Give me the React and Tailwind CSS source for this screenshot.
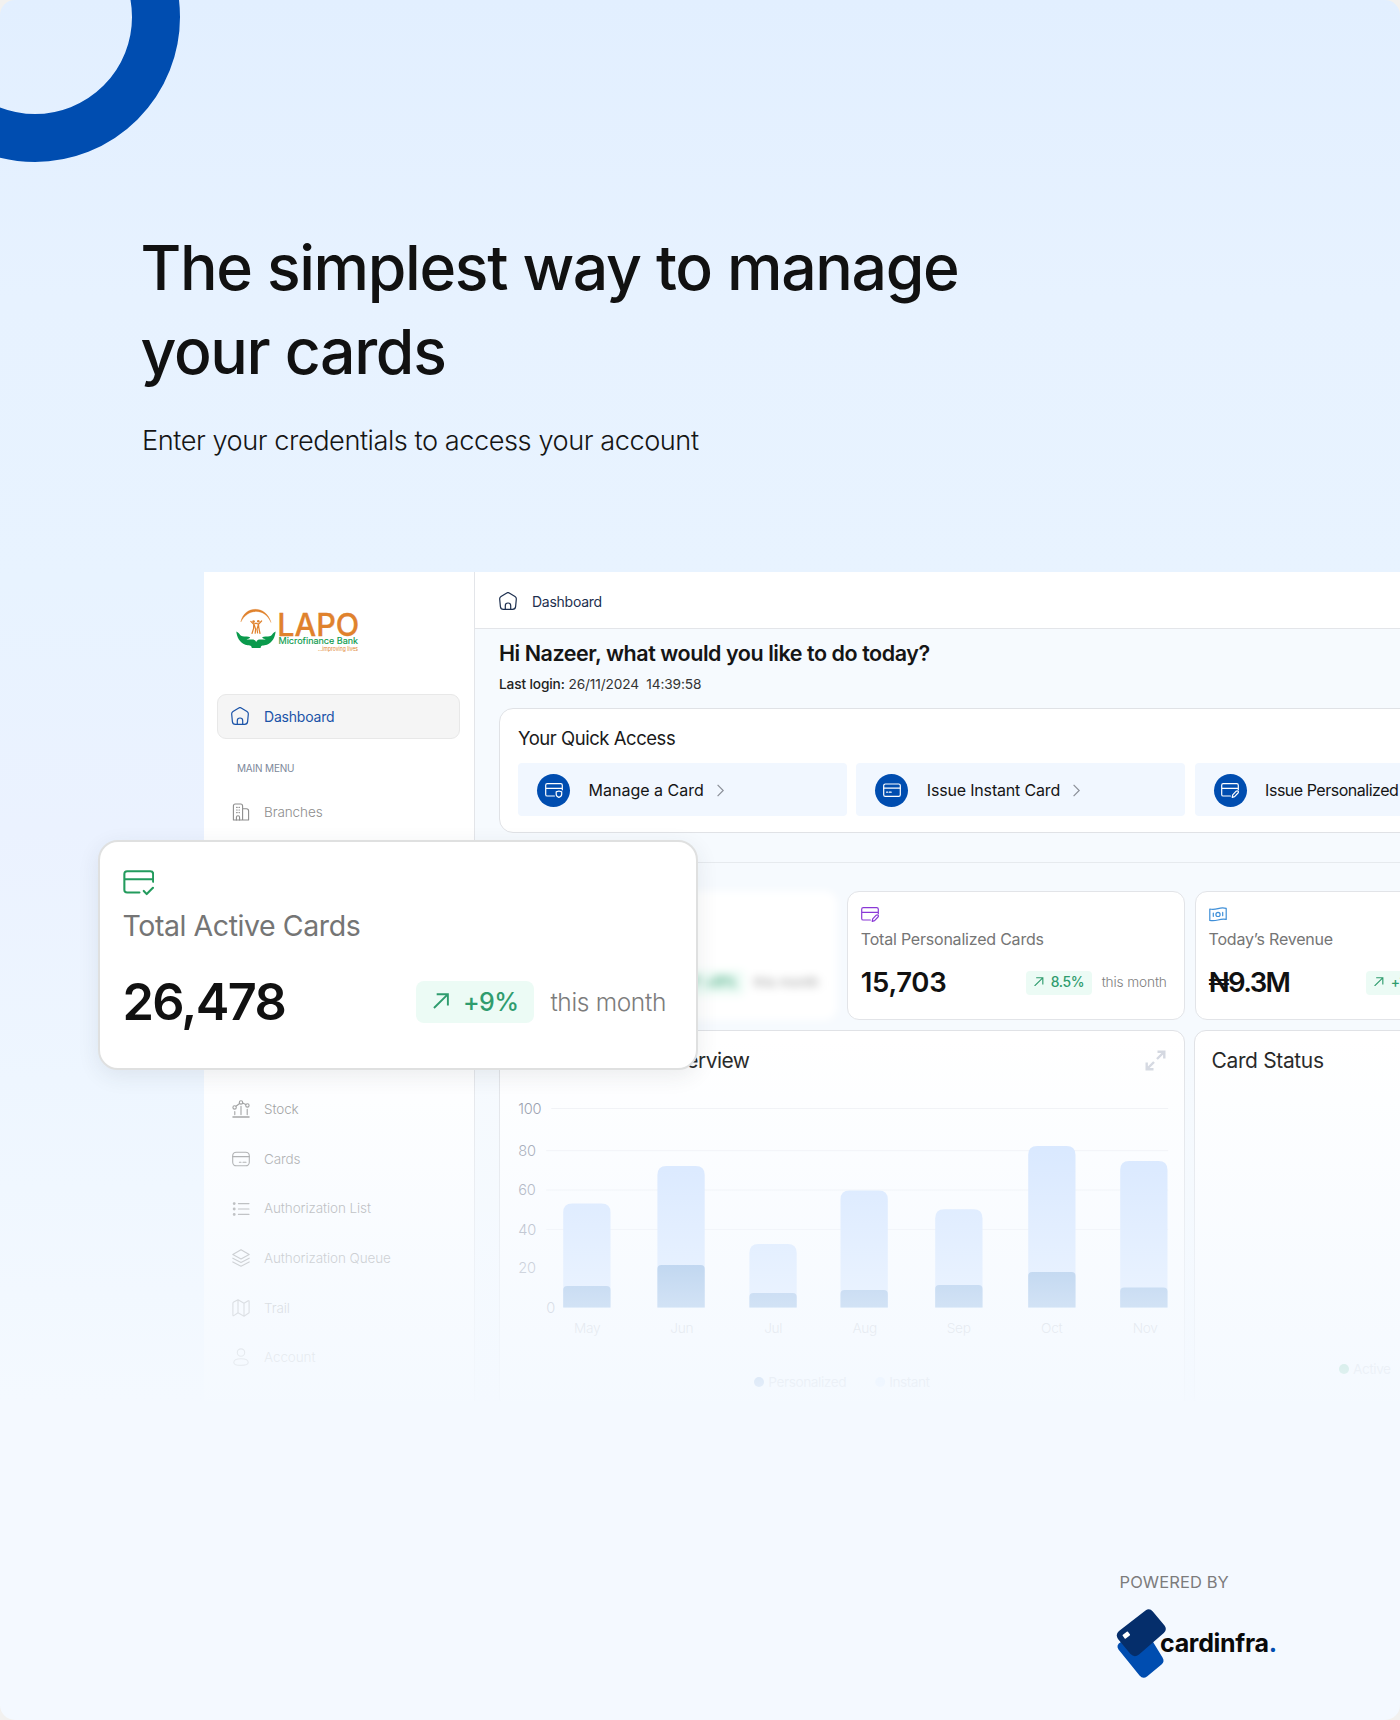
import React from "react";

function HomeIcon({ className }) {
  return (
    <svg className={className} width="18" height="18" viewBox="0 0 18 18" fill="none" stroke="currentColor" strokeWidth="1.2" strokeLinejoin="round" strokeLinecap="round">
      <path d="M7.800 .9 Q9 .2 10.200 .9 L16 4.500 Q17.500 5.500 17.300 7.200 L16.600 14.600 Q16.300 17.300 13.600 17.300 H4.400 Q1.700 17.300 1.400 14.600 L.7 7.200 Q.5 5.500 2 4.500 Z" />
      <path d="M6.300 17.100 V13.700 A2.700 2.700 0 0 1 11.700 13.700 V17.100" />
    </svg>
  );
}

function NavIcon({ name }) {
  const common = { width: 18, height: 18, viewBox: "0 0 18 18", fill: "none", stroke: "currentColor", strokeWidth: 1.1, strokeLinecap: "round", strokeLinejoin: "round" };
  if (name === "branches")
    return (
      <svg {...common}>
        <path d="M1.4 17 V3 Q1.4 1 3.4 1 H8.6 Q10.6 1 10.6 3 V17 Z M10.6 5.8 H14.4 Q16.6 5.8 16.6 8 V17 H10.6" />
        <path d="M4.4 17 V14.4 A1.6 1.6 0 0 1 7.6 14.4 V17 M4.6 4.4 H5.2 M7 4.4 H7.4 M4.6 7 H5.2 M7 7 H7.4 M4.6 9.6 H5.2 M7 9.6 H7.4" />
      </svg>
    );
  if (name === "stock")
    return (
      <svg {...common}>
        <path d="M1 17 H17" strokeWidth="1.5" />
        <circle cx="2.6" cy="7.4" r="1.7" /><circle cx="9" cy="2.4" r="1.7" /><circle cx="15.4" cy="5.4" r="1.7" />
        <path d="M4 6.2 L7.6 3.5 M10.6 3 L13.8 4.6 M2.8 11.5 V14.6 M9 6.4 V14.6 M15.2 9.4 V14.6" />
      </svg>
    );
  if (name === "cards")
    return (
      <svg {...common}>
        <rect x=".7" y="2.2" width="16.6" height="13.6" rx="3.6" />
        <path d="M.7 6.6 H17.3 M7.4 12.2 H9 M11 12.2 H14" />
      </svg>
    );
  if (name === "list")
    return (
      <svg {...common}>
        <path d="M6.4 3.6 H17 M6.4 9 H17 M6.4 14.4 H17" />
        <circle cx="2.2" cy="3.6" r=".9" fill="currentColor" /><circle cx="2.2" cy="9" r=".9" fill="currentColor" /><circle cx="2.2" cy="14.4" r=".9" fill="currentColor" />
      </svg>
    );
  if (name === "layers")
    return (
      <svg {...common}>
        <path d="M9 .8 L17.2 5.4 L9 10 L.8 5.4 Z M.8 9.2 L9 13.6 L17.2 9.2 M.8 12.9 L9 17.3 L17.2 12.9" />
      </svg>
    );
  if (name === "map")
    return (
      <svg {...common}>
        <path d="M.9 4.4 Q.9 3.4 1.7 3 L6 .8 L12 4.2 L16.2 1.8 Q17.1 1.4 17.1 2.4 V13.8 L12 17.2 L6 13.8 L1.8 16.6 Q.9 17.1 .9 16 Z M6 .8 V13.8 M12 4.2 V17.2" />
      </svg>
    );
  return (
    <svg {...common}>
      <circle cx="9" cy="4.6" r="3.7" />
      <path d="M9 10.8 C13.2 10.8 16.2 12.4 16.2 14.6 C16.2 16.6 13.8 17.4 9 17.4 C4.2 17.4 1.8 16.6 1.8 14.6 C1.8 12.4 4.8 10.8 9 10.8 Z" />
    </svg>
  );
}

function CardIcon({ kind, className }) {
  return (
    <svg className={className} viewBox="0 0 18 15" fill="none" stroke="currentColor" strokeWidth="1.2" strokeLinecap="round" strokeLinejoin="round">
      {kind === "plain" ? (
        <>
          <rect x=".7" y="1" width="16.6" height="12.4" rx="1.6" />
          <path d="M.7 5.2 H17.3 M3.6 9.2 H4.6 M6.2 9.2 H8.2" />
        </>
      ) : (
        <>
          <path d="M9.4 13 H2.3 Q.7 13 .7 11.4 V2.3 Q.7 .7 2.3 .7 H15.7 Q17.3 .7 17.3 2.3 V6.8 M.7 5.300 H17.3" />
          {kind === "check" && <path d="M11.9 12.1 L13.6 13.9 L17.2 10.3" />}
          {kind === "shield" && <path d="M11.2 8.8 L13.9 8 L16.7 8.8 V11.2 Q16.7 13.4 13.9 14.4 Q11.2 13.4 11.2 11.2 Z" />}
          {kind === "pen" && <path d="M15.2 8.2 Q16.2 7.4 17 8.2 Q17.8 9.1 17 10 L13.6 13.6 L11.2 14.3 L11.7 11.9 Z" />}
        </>
      )}
    </svg>
  );
}

function MoneyIcon({ className }) {
  return (
    <svg className={className} viewBox="0 0 18 15" fill="none" stroke="currentColor" strokeWidth="1.2" strokeLinecap="round" strokeLinejoin="round">
      <path d="M.8 2 Q4.500 2.800 9 1.600 T17.2 1.400 V12.400 Q13.500 11.800 9 13 T.8 13.400 Z" />
      <circle cx="9" cy="7.400" r="2.100" />
      <path d="M4.300 6 V9.300 M13.700 5.400 V8.700" />
    </svg>
  );
}

function TrendArrow({ className }) {
  return (
    <svg className={className} viewBox="0 0 10 10" fill="none" stroke="currentColor" strokeWidth="1.2">
      <path d="M.6 9.4 L9.2 .9 M2.3 .8 H9.3 V7.8" />
    </svg>
  );
}

function LapoLogo() {
  return (
    <svg className="overflow-visible" width="124" height="44" viewBox="0 0 124 44" fontFamily="Inter, sans-serif">
      <path d="M4.800 13 C8 -3.500 30 -4.500 35 13.500 C29 -1.500 11.500 -.8 4.800 13 Z" fill="#e0822d" stroke="#e0822d" strokeWidth=".3" />
      <g stroke="#e0822d" strokeWidth="1.200" fill="none" strokeLinecap="round">
        <path d="M14.800 12.300 L17.700 15.200 L20 14.200 L22.500 15.200 L25.600 12 M17.700 15.200 L17.600 19.500 L16 24.500 M18.300 16 L19.600 20 L19.200 24.200 M22.500 15.200 L22.900 19.500 L24 24.500 M22.300 16 L21 20 L21.600 24" />
      </g>
      <circle cx="17.600" cy="12.600" r="1.300" fill="#e0822d" /><circle cx="22.300" cy="12.200" r="1.300" fill="#e0822d" />
      <path d="M.3 22.600 C3 23.600 3.500 25.500 5 26.800 C8 28.400 11 26.400 14.200 28.200 C13.400 29.800 11.500 30 10.500 30.200 C14.500 31.400 18.500 28.600 20.200 33 C21.800 28.600 25.800 31.400 29.800 30.200 C28.800 30 26.900 29.800 26.100 28.200 C29.300 26.400 32 28.400 35 26.800 C36.500 25.500 37 23.600 39.600 22.600 C39 28.500 36.500 33.500 31 35.800 C27.500 37 24.800 35.800 24.600 39 H15.800 C15.600 35.800 12.800 37 9.300 35.800 C3.500 33.500 1 28.500 .3 22.600 Z" fill="#0a9a4c" />
      <text x="41.300" y="26.600" fontSize="31" fontWeight="500" fill="#e0822d" stroke="#e0822d" strokeWidth=".3" textLength="82" lengthAdjust="spacingAndGlyphs">LAPO</text>
      <text x="42.500" y="34.900" fontSize="9" fontWeight="400" fill="#0a9a4c" stroke="#0a9a4c" strokeWidth=".15" textLength="79.500" lengthAdjust="spacingAndGlyphs">Microfinance Bank</text>
      <text x="82" y="42.200" fontSize="5.600" fill="#e0822d" textLength="40" lengthAdjust="spacingAndGlyphs">...improving lives</text>
    </svg>
  );
}

function NavRow({ icon, label }) {
  return (
    <li className="flex h-[49.6px] items-center gap-[14.500px] pl-[27.500px] text-[13.5px] tracking-[-0.007em] text-[#8d8d8d]">
      <NavIcon name={icon} />
      <span className="font-[350]">{label}</span>
    </li>
  );
}

function Sidebar() {
  return (
    <aside className="w-[271px] shrink-0 border-r-[1.5px] border-[#e3e5e9] bg-white">
      <div className="pt-[37px] pl-[32px]"><LapoLogo /></div>
      <div className="mt-[40.5px] ml-[13px] flex h-[45px] w-[243px] items-center gap-[15px] rounded-[9px] border border-[#e8e8e8] bg-[#f5f5f5] pl-[13px] text-[14px] tracking-[-0.015em] text-[#1a53a8]">
        <HomeIcon />
        <span>Dashboard</span>
      </div>
      <p className="mt-[21.5px] ml-[33px] text-[10px] leading-[16px] tracking-[-0.018em] text-[#7d889a]">MAIN MENU</p>
      <ul className="mt-[11px]">
        <NavRow icon="branches" label="Branches" />
      </ul>
      <ul className="mt-[248px]">
        <NavRow icon="stock" label="Stock" />
        <NavRow icon="cards" label="Cards" />
        <NavRow icon="list" label="Authorization List" />
        <NavRow icon="layers" label="Authorization Queue" />
        <NavRow icon="map" label="Trail" />
        <NavRow icon="account" label="Account" />
      </ul>
    </aside>
  );
}

function QuickTile({ kind, label, labelClass }) {
  return (
    <div className="flex h-[53px] w-[328.500px] shrink-0 items-center rounded-[4px] bg-[#f1f7ff] pt-[1px] pl-[19px]">
      <span className="flex size-[33px] shrink-0 items-center justify-center rounded-full bg-[#004db0] text-white">
        <CardIcon kind={kind} className="h-[15px] w-[18px]" />
      </span>
      <span className={`ml-[18.500px] text-[16px] whitespace-nowrap text-[#151515] ${labelClass}`}>{label}</span>
      <svg className="ml-[13px] shrink-0" width="7" height="13" viewBox="0 0 7 13" fill="none" stroke="#8b8f98" strokeWidth="1.2"><path d="M.6 .8 L6.200 6.500 L.6 12.200" /></svg>
    </div>
  );
}

function StatCard({ icon, label, value, delta, className, valueClass }) {
  return (
    <div className={`h-[129px] w-[338px] shrink-0 rounded-[12px] border border-[#e2e4e8] bg-white pt-[15px] pr-[17px] pl-[13px] ${className || ""}`}>
      {icon}
      <p className="mt-[7px] text-[16px] leading-[20px] tracking-[-0.013em] text-[#757575]">{label}</p>
      <div className="mt-[17.500px] flex h-[32px] items-center">
        <span className={`text-[27.500px] font-semibold text-[#111] ${valueClass}`}>{value}</span>
        <span className="ml-auto flex h-[24px] items-center gap-[7px] rounded-[4px] bg-[#ecfbf5] px-[8px] text-[#2f9c6e]">
          <TrendArrow className="mb-[2px] size-[9.500px]" />
          <span className="text-[13.900px] font-medium tracking-[-0.025em]">{delta}</span>
        </span>
        <span className="ml-[9.500px] text-[13.700px] font-[350] tracking-[-0.01em] text-[#808080]">this month</span>
      </div>
    </div>
  );
}

const BARS = [
  { m: "May", x: 563, top: 1203.5, low: 1286, lx: 587 },
  { m: "Jun", x: 657.2, top: 1166, low: 1265, lx: 681.5 },
  { m: "Jul", x: 749.2, top: 1244, low: 1293, lx: 773 },
  { m: "Aug", x: 840.3, top: 1190.5, low: 1290, lx: 864.5 },
  { m: "Sep", x: 935, top: 1209.2, low: 1285, lx: 958.5 },
  { m: "Oct", x: 1028, top: 1146, low: 1272, lx: 1051.5 },
  { m: "Nov", x: 1120, top: 1161, low: 1287.5, lx: 1145 },
];
const TICKS = [[100, 1108.5, 551], [80, 1150.7, 546], [60, 1190, 546], [40, 1229.5, 546], [20, 1268, 0], [0, 1307.2, 0]];
const BASE = 1307.5;

function IssuanceChart() {
  return (
    <svg className="block" width="684" height="325" viewBox="499.8 1075 684 325" fontFamily="Inter, sans-serif">
      {TICKS.map(([v, y, x]) => (
        <g key={v}>
          {x > 0 && <path d={`M${x} ${y} H1168`} stroke="#f0f1f4" />}
          <text x={v === 0 ? 546 : 518} y={y + 5.3} fontSize="14.6" letterSpacing="-.2" fontWeight="350" fill="#858b9c">{v}</text>
        </g>
      ))}
      {BARS.map((b) => (
        <g key={b.m}>
          <path d={`M${b.x} ${BASE} V${b.top + 9} q0 -9 9 -9 h29.300 q9 0 9 9 V${BASE} Z`} fill="#cde1ff" />
          <path d={`M${b.x} ${BASE} V${b.low + 4} q0 -4 4 -4 h39.300 q4 0 4 4 V${BASE} Z`} fill="#659ad6" />
          <text x={b.lx} y="1333" textAnchor="middle" fontSize="13.700" letterSpacing="-.3" fontWeight="350" fill="#aeb1b8">{b.m}</text>
        </g>
      ))}
      <circle cx="758.800" cy="1382" r="5" fill="#004db0" />
      <text x="768" y="1386.800" fontSize="13.700" letterSpacing="-.45" fill="#8b90a0">Personalized</text>
      <circle cx="880" cy="1382" r="5" fill="#bcd8ff" />
      <text x="889" y="1386.800" fontSize="13.700" letterSpacing="-.5" fill="#8b90a0">Instant</text>
    </svg>
  );
}

function Dashboard() {
  return (
    <div className="relative ml-[204px] flex h-[829px] w-[1196px] overflow-hidden">
      <Sidebar />
      <main className="w-[925px] shrink-0 overflow-hidden bg-[#f6fafe]">
        <header className="flex h-[57px] items-center gap-[15px] border-b-[1.5px] border-[#e3e5e9] bg-white pt-[2px] pl-[24px] text-[14px] tracking-[-0.018em] text-[#1d2f4f]">
          <HomeIcon />
          <span>Dashboard</span>
        </header>
        <div className="pt-[10px] pl-[24px]">
          <h2 className="text-[21.500px] leading-[28px] font-semibold tracking-[-0.021em] text-[#151515]">Hi Nazeer, what would you like to do today?</h2>
          <p className="mt-[7px] text-[13.700px] leading-[20px] tracking-[-0.01em] whitespace-pre text-[#333]"><span className="font-medium text-[#222]">Last login:</span>{" 26/11/2024  14:39:58"}</p>

          <section className="mt-[14px] h-[125px] w-[1050px] rounded-[14px] border border-[#e0e2e6] bg-white pt-[16.500px] pl-[18px]">
            <h3 className="text-[18.500px] leading-[24px] tracking-[-0.025em] text-[#1a1a1a]">Your Quick Access</h3>
            <div className="mt-[13.500px] flex gap-[9.800px]">
              <QuickTile kind="shield" label="Manage a Card" labelClass="tracking-[0em]" />
              <QuickTile kind="plain" label="Issue Instant Card" labelClass="tracking-[-0.011em]" />
              <QuickTile kind="pen" label="Issue Personalized Card" labelClass="tracking-[-0.03em]" />
            </div>
          </section>

          <div className="mt-[29px] h-px w-[1000px] bg-[#e6eaee]" />

          <div className="mt-[28px] flex gap-[9.800px]">
            <StatCard className="border-transparent blur-[4px]" icon={<CardIcon kind="check" className="h-[15px] w-[18px] text-[#1d9f5c]" />} label="Total Active Cards" value="26,478" valueClass="tracking-[-0.02em]" delta="+9%" />
            <StatCard icon={<CardIcon kind="pen" className="h-[15px] w-[18px] text-[#8a38d6]" />} label="Total Personalized Cards" value="15,703" valueClass="tracking-[-0.012em]" delta="8.5%" />
            <StatCard icon={<MoneyIcon className="h-[15px] w-[18px] text-[#3f8fd8]" />} label="Today’s Revenue" value="₦9.3M" valueClass="tracking-[-0.058em]" delta="+11.1%" />
          </div>

          <div className="mt-[10px] flex gap-[8.500px]">
            <section className="h-[380px] w-[686px] shrink-0 rounded-[12px] border border-[#e0e2e6] bg-white">
              <div className="flex h-[44px] items-center justify-between pt-[15px] pr-[18.500px] pl-[17.500px]">
                <h3 className="w-[232px] text-right text-[21px] leading-[28px] tracking-[-0.025em] whitespace-nowrap text-[#1a1a1a]">Card Issuance Overview</h3>
                <svg width="21" height="21" viewBox="0 0 21 21" fill="none" stroke="#d3d7e0" strokeWidth="2.400"><path d="M12.500 1.700 H19.300 V8.500 M19 2 L12 9 M1.700 12.500 V19.300 H8.500 M2 19 L9 12" /></svg>
              </div>
              <IssuanceChart />
            </section>
            <section className="h-[380px] w-[338px] shrink-0 rounded-[12px] border border-[#e0e2e6] bg-white">
              <h3 className="mt-[15px] ml-[17px] text-[21px] leading-[29px] tracking-[-0.017em] text-[#1a1a1a]">Card Status</h3>
              <div className="mt-[284px] ml-[144.500px] flex h-[20px] items-center gap-[4.500px] text-[13.700px] tracking-[-0.035em] text-[#a8acb8]">
                <span className="size-[9.500px] rounded-full bg-[#17a567]" />
                <span>Active</span>
              </div>
            </section>
          </div>
        </div>
      </main>
      <div className="pointer-events-none absolute inset-x-0 bottom-0 h-[361px] bg-[linear-gradient(to_bottom,rgba(244,249,255,0)_0px,rgba(244,249,255,0.3)_100px,rgba(244,249,255,0.75)_262px,rgba(244,249,255,0.9)_335px,rgba(244,249,255,0.96)_361px)]" />
    </div>
  );
}

function HighlightCard() {
  return (
    <div className="absolute top-[840px] left-[98px] h-[230px] w-[600px] rounded-[20px] border-2 border-[#dfe0e0] bg-white pt-[28px] pr-[30px] pl-[22.500px] shadow-[0_6px_22px_rgba(40,50,70,0.09)]">
      <CardIcon kind="check" className="h-[26px] w-[31.500px] text-[#239b5d]" />
      <p className="mt-[12px] text-[28.500px] leading-[36px] tracking-[-0.015em] text-[#757575]">Total Active Cards</p>
      <div className="mt-[29.500px] flex h-[56px] items-center">
        <span className="text-[50.500px] font-semibold tracking-[-0.033em] text-[#111]">26,478</span>
        <span className="ml-auto flex h-[42px] w-[118px] items-center rounded-[8px] bg-[#ecfbf5] pt-[1px] pl-[17px] text-[#2f9c6e]">
          <TrendArrow className="mb-[3px] size-[16px]" />
          <span className="ml-[13.500px] pt-[1px] text-[25px] font-medium tracking-[-0.02em]">+9%</span>
        </span>
        <span className="ml-[16px] pt-[1px] text-[24.500px] font-[350] tracking-[-0.014em] text-[#7c7c7c]">this month</span>
      </div>
    </div>
  );
}

function CardinfraLogo() {
  return (
    <svg className="block" width="164" height="72" viewBox="1114 1608 164 72" fontFamily="Inter, sans-serif">
      <path d="M1121 1642 L1150 1637 L1162.500 1657.500 Q1165 1661.500 1161.500 1664.500 L1147 1676.500 Q1143 1679.500 1139.500 1675.500 L1118.500 1649.500 Q1115.500 1645 1121 1642 Z" fill="#004db0" />
      <path d="M1119 1631 L1145.500 1610.500 Q1149.500 1607.500 1152.800 1611.500 L1164.500 1625.500 Q1167.500 1629.500 1163.800 1633 L1139 1654.500 Q1134.500 1658 1130.500 1654 L1118 1639 Q1115 1634.500 1119 1631 Z" fill="#052e6b" />
      <rect x="1123" y="1632.700" width="6.600" height="4.800" rx=".8" fill="#fff" transform="rotate(-38 1126.300 1635.100)" />
      <text x="1160" y="1651.800" fontSize="25" fontWeight="700" fill="#0a0a0a" textLength="109">cardinfra</text>
      <text x="1268.800" y="1651.800" fontSize="25" fontWeight="700" fill="#004db0">.</text>
    </svg>
  );
}

export default function App() {
  return (
    <div className="h-[1720px] w-[1400px] overflow-hidden bg-[#f2f1ef] font-['Inter',sans-serif]">
      <div className="relative h-[1720px] w-[1400px] overflow-hidden rounded-[15px] bg-[linear-gradient(to_bottom,#e2efff_0px,#e7f2ff_300px,#e8f3ff_580px,#ebf2ff_830px,#eef6ff_1080px,#f4f9ff_1400px,#f4f9ff_1720px)]">
        <div className="absolute top-[-128px] left-[-110px] size-[290px] rounded-full border-[48px] border-[#004db0]" />
        <div className="pt-[225px] pl-[142px]">
          <h1 className="-ml-[1.500px] w-[900px] text-[62.500px] leading-[84px] font-[450] tracking-[-0.0215em] text-[#111]">The simplest way to manage<br />your cards</h1>
          <p className="mt-[28px] text-[27.200px] leading-[40px] font-light tracking-[-0.017em] text-[#151515]">Enter your credentials to access your account</p>
        </div>
        <div className="h-[111px]" />
        <Dashboard />
        <HighlightCard />
        <footer className="mt-[171px] ml-[1114px]">
          <p className="ml-[5.500px] text-[16.500px] leading-[20px] tracking-[0.006em] text-[#7c7c7c]">POWERED BY</p>
          <div className="mt-[16px]"><CardinfraLogo /></div>
        </footer>
      </div>
    </div>
  );
}
